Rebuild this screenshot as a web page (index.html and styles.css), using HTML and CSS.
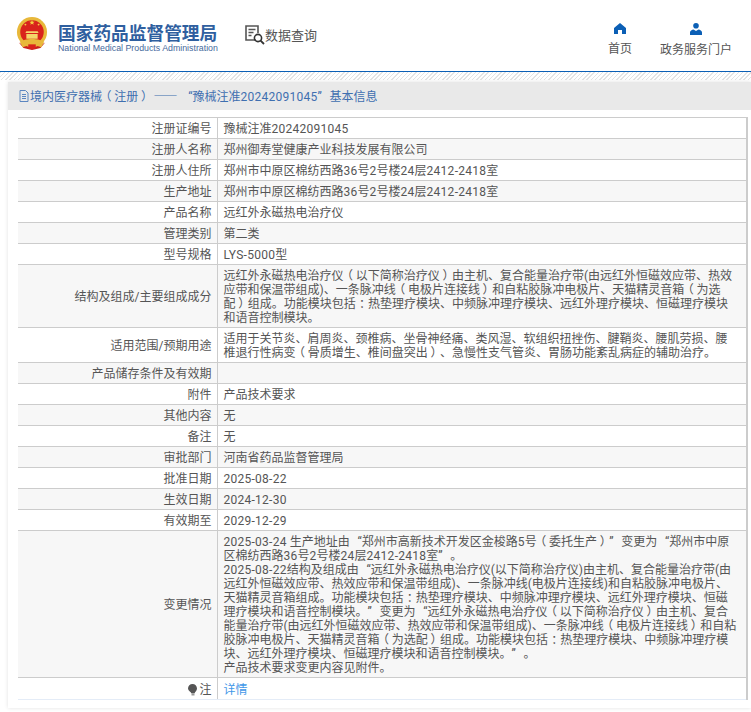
FILE: index.html
```html
<!DOCTYPE html>
<html lang="zh-CN">
<head>
<meta charset="utf-8">
<title>国家药品监督管理局</title>
<link rel="stylesheet" href="styles.css">
</head>
<body>
<header class="header">
  <div class="brand">
    <svg class="emblem" viewBox="0 0 34 36" width="32" height="34">
      <path d="M3 27 L8 33 L17 35 L26 33 L31 27 L26 30 L17 31 L8 30 Z" fill="#c8201c"/>
      <circle cx="17" cy="16" r="16" fill="#e8b83a"/>
      <circle cx="17" cy="16" r="12.5" fill="#d9231c"/>
      <path d="M16.2 5 l.8 -2 .8 2 2 0 -1.6 1.3 .6 2 -1.8 -1.2 -1.8 1.2 .6 -2 -1.6 -1.3z" fill="#f5d040"/>
      <circle cx="10" cy="8" r="1" fill="#f5d040"/><circle cx="24" cy="8" r="1" fill="#f5d040"/>
      <path d="M11 15 h12 l1 2 h-14z M11 18 h12 v5 h-12z" fill="#f4d76a"/>
      <path d="M4 26 Q17 20 30 26 L27 32 Q17 28 7 32Z" fill="#e8b83a"/>
      <rect x="13" y="29" width="8" height="5" fill="#d9231c"/>
    </svg>
    <div class="brand-text">
      <div class="brand-cn">国家药品监督管理局</div>
      <div class="brand-en">National Medical Products Administration</div>
    </div>
  </div>
  <div class="query">
    <svg class="query-icon" viewBox="0 0 20 21" width="20" height="21">
      <path d="M11 15H1V1h12v7" fill="none" stroke="#555" stroke-width="1.6"/>
      <path d="M3.500 4.500h7M3.500 7.500h5M3.500 10.500h3" stroke="#555" stroke-width="1.3"/>
      <circle cx="13" cy="13" r="3.600" fill="none" stroke="#333" stroke-width="1.6"/>
      <path d="M15.600 15.600L19 19" stroke="#333" stroke-width="1.8"/>
    </svg>
    <span>数据查询</span>
  </div>
  <nav class="nav">
    <a class="nav-item">
      <svg viewBox="0 0 12 11" width="12" height="11"><path d="M6 0L12 5v6H8V7H4v4H0V5z" fill="#0b5fb5"/></svg>
      <span>首页</span>
    </a>
    <a class="nav-item">
      <svg viewBox="0 0 12 12" width="12" height="12"><circle cx="6" cy="2.800" r="2.800" fill="#0b5fb5"/><path d="M0 12V9.500C0 7.500 2 6.600 3.500 6.400L6 8l2.500-1.600C10 6.600 12 7.500 12 9.500V12z" fill="#0b5fb5"/></svg>
      <span>政务服务门户</span>
    </a>
  </nav>
</header>
<div class="dots"></div>
<main class="panel">
  <div class="crumb">
    <svg viewBox="0 0 10 12" width="10" height="12"><path d="M1 .5h5.500L9 3v8.500H1zM3 4.500h4M3 6.500h4M3 8.500h4" fill="none" stroke="#5b86c0" stroke-width="1"/></svg>
    <span>境内医疗器械<span class="fw">（</span>注册<span class="fw">）</span> <span class="dash">——</span> <span class="ql">“</span>豫械注准<span class="num">20242091045</span><span class="qr">”</span>基本信息</span>
  </div>
  <table class="info">
    <tr><th>注册证编号</th><td>豫械注准<span class="num">20242091045</span></td></tr>
    <tr><th>注册人名称</th><td>郑州御寿堂健康产业科技发展有限公司</td></tr>
    <tr><th>注册人住所</th><td>郑州市中原区棉纺西路<span class="num">36</span>号<span class="num">2</span>号楼<span class="num">24</span>层<span class="num">2412-2418</span>室</td></tr>
    <tr><th>生产地址</th><td>郑州市中原区棉纺西路<span class="num">36</span>号<span class="num">2</span>号楼<span class="num">24</span>层<span class="num">2412-2418</span>室</td></tr>
    <tr><th>产品名称</th><td>远红外永磁热电治疗仪</td></tr>
    <tr><th>管理类别</th><td>第二类</td></tr>
    <tr><th>型号规格</th><td><span class="num">LYS-5000</span>型</td></tr>
    <tr><th>结构及组成/主要组成成分</th><td>远红外永磁热电治疗仪<span class="fw">（</span>以下简称治疗仪<span class="fw">）</span>由主机、复合能量治疗带(由远红外恒磁效应带、热效应带和保温带组成)、一条脉冲线<span class="fw">（</span>电极片连接线<span class="fw">）</span>和自粘胶脉冲电极片、天猫精灵音箱<span class="fw">（</span>为选配<span class="fw">）</span>组成。功能模块包括<span class="fw">：</span>热垫理疗模块、中频脉冲理疗模块、远红外理疗模块、恒磁理疗模块和语音控制模块。</td></tr>
    <tr><th>适用范围/预期用途</th><td>适用于关节炎、肩周炎、颈椎病、坐骨神经痛、类风湿、软组织扭挫伤、腱鞘炎、腰肌劳损、腰椎退行性病变<span class="fw">（</span>骨质增生、椎间盘突出<span class="fw">）</span>、急慢性支气管炎、胃肠功能紊乱病症的辅助治疗。</td></tr>
    <tr><th>产品储存条件及有效期</th><td></td></tr>
    <tr><th>附件</th><td>产品技术要求</td></tr>
    <tr><th>其他内容</th><td>无</td></tr>
    <tr><th>备注</th><td>无</td></tr>
    <tr><th>审批部门</th><td>河南省药品监督管理局</td></tr>
    <tr><th>批准日期</th><td><span class="num">2025-08-22</span></td></tr>
    <tr><th>生效日期</th><td><span class="num">2024-12-30</span></td></tr>
    <tr><th>有效期至</th><td><span class="num">2029-12-29</span></td></tr>
    <tr><th>变更情况</th><td><span class="num">2025-03-24</span> 生产地址由<span class="ql">“</span>郑州市高新技术开发区金梭路<span class="num">5</span>号<span class="fw">（</span>委托生产<span class="fw">）</span><span class="qr">”</span>变更为<span class="ql">“</span>郑州市中原区棉纺西路<span class="num">36</span>号<span class="num">2</span>号楼<span class="num">24</span>层<span class="num">2412-2418</span>室<span class="qr">”</span>。<br><span class="num">2025-08-22</span>结构及组成由<span class="ql">“</span>远红外永磁热电治疗仪(以下简称治疗仪)由主机、复合能量治疗带(由远红外恒磁效应带、热效应带和保温带组成)、一条脉冲线(电极片连接线)和自粘胶脉冲电极片、天猫精灵音箱组成。功能模块包括<span class="fw">：</span>热垫理疗模块、中频脉冲理疗模块、远红外理疗模块、恒磁理疗模块和语音控制模块。<span class="qr">”</span>变更为<span class="ql">“</span>远红外永磁热电治疗仪<span class="fw">（</span>以下简称治疗仪<span class="fw">）</span>由主机、复合能量治疗带(由远红外恒磁效应带、热效应带和保温带组成)、一条脉冲线<span class="fw">（</span>电极片连接线<span class="fw">）</span>和自粘胶脉冲电极片、天猫精灵音箱<span class="fw">（</span>为选配<span class="fw">）</span>组成。功能模块包括<span class="fw">：</span>热垫理疗模块、中频脉冲理疗模块、远红外理疗模块、恒磁理疗模块和语音控制模块。<span class="qr">”</span>。<br>产品技术要求变更内容见附件。</td></tr>
    <tr class="last"><th><svg class="bulb" viewBox="0 0 9 12" width="9" height="12"><path d="M4.500 0C7 0 9 2 9 4.500 9 6.500 7 8 6.500 9.500h-3C3 8 0 6.500 0 4.500 0 2 2 0 4.500 0z" fill="#555"/><rect x="3.500" y="10" width="3" height="1.500" fill="#999"/></svg>注</th><td><a class="detail">详情</a></td></tr>
  </table>
</main>
</body>
</html>
```
FILE: styles.css
```css
* { box-sizing: border-box; }
html, body { margin: 0; padding: 0; background: #fff; }
body { font-family: Roboto, "Noto Sans CJK SC", sans-serif; font-size: 12px; color: #555; height: 712px; overflow: hidden; }
.dash { font-family: "Noto Sans CJK SC", sans-serif; }
.num { letter-spacing: .26px; }
.ql, .qr { display: inline-block; width: 1em; }
.ql { text-align: right; }
.qr { text-align: left; }
.fw { font-feature-settings: "palt"; padding: 0 .26em; }
.header { display: flex; align-items: flex-start; height: 72px; border-bottom: 1px solid #0b5fb5; padding: 17px 0 0 16px; }
.brand { display: flex; gap: 10px; width: 229px; }
.emblem { flex: none; }
.brand-text { padding-top: 5px; }
.brand-cn { font-family: "Noto Sans CJK SC", sans-serif; font-size: 17.700px; line-height: 20px; font-weight: 700; color: #2f5f9f; white-space: nowrap; }
.brand-en { font-family: "Liberation Sans", sans-serif; font-size: 8.800px; line-height: 11px; margin-top: 1px; color: #45699c; white-space: nowrap; }
.query { display: flex; align-items: center; gap: 0; padding-top: 8px; font-size: 13px; line-height: 17px; color: #555; }
.nav { margin-left: auto; display: flex; gap: 28px; padding: 6px 19px 0 0; }
.nav-item { display: flex; flex-direction: column; align-items: center; gap: 7px; font-size: 12px; line-height: 17px; color: #555; }
.dots { height: 8px; background: repeating-linear-gradient(135deg, #e4e4e4 0 1px, #fff 1px 3px); }
.panel { margin: 2px 0 0 8px; background: #fff; box-shadow: 0 0 4px rgba(0,0,0,.12); padding: 0 10px 8px 10px; height: 626px; }
.crumb { display: flex; align-items: center; gap: 1px; margin: 0 -10px; height: 28px; padding-left: 11px; background: #e9e9e9; color: #3f6fb0; line-height: 28px; }
.info { border-collapse: collapse; table-layout: fixed; width: 730px; margin-top: 7px; border-top: 1px solid #ccc; border-right: 2px solid #ccc; line-height: 14px; }
.info th, .info td { border-bottom: 1px solid #ccc; padding: 4px 9px 2px 6px; font-weight: 400; color: #555; vertical-align: middle; }
.info th { width: 199px; text-align: right; padding: 4px 5px 2px 0; border-right: 1px solid #ccc; }
.info tr:nth-child(odd) > * { background: #fff; }
.info tr:nth-child(even) > * { background: #f7f7f7; }
.info td { text-align: left; }
.info tr > * { height: 21px; }
.info tr.last > * { height: 22px; border-bottom: 1px solid #e4ecf7; }
.bulb { vertical-align: -2px; margin-right: 2px; }
.detail { color: #3f97e8; }
```
